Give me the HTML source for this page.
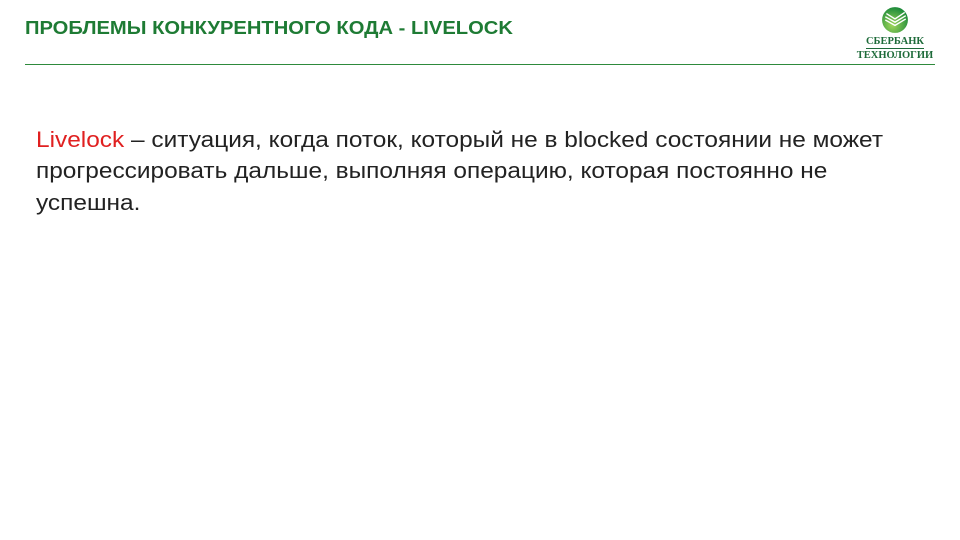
<!DOCTYPE html>
<html><head><meta charset="utf-8"><style>
body{margin:0;width:960px;height:540px;background:#fff;position:relative;overflow:hidden;font-family:"Liberation Sans",sans-serif}
.t{position:absolute;left:25px;top:18px;font-size:18px;font-weight:bold;color:#1e7b34;white-space:nowrap;transform:scaleX(1.12);transform-origin:left}
.hr{position:absolute;left:25px;top:64px;width:910px;height:1px;background:#2e8a3c}
.b{position:absolute;left:36px;font-size:22px;color:#222;white-space:nowrap;transform-origin:left;transform:scaleX(1.11)}
.r{color:#e02020}
.logo{position:absolute;left:850px;top:6px;width:90px;text-align:center;font-family:"Liberation Serif",serif;font-weight:bold;color:#1e6b3a;font-size:10.5px;line-height:13px}
</style></head><body>
<div class="t">ПРОБЛЕМЫ КОНКУРЕНТНОГО КОДА - LIVELOCK</div>
<div class="logo">
<svg width="28" height="28" viewBox="0 0 26 26" style="display:block;margin:0 auto 1px">
<defs><radialGradient id="g" cx="40%" cy="70%" r="70%"><stop offset="0" stop-color="#9fd65a"/><stop offset="1" stop-color="#1c8a3a"/></radialGradient></defs>
<circle cx="13" cy="13" r="12" fill="url(#g)"/>
<path d="M5 7l8 5 9-6M4 10l9 5 10-6M4 13l9 5 10-6" stroke="#fff" stroke-width="1.3" fill="none"/>
</svg>
<div style="border-bottom:1px solid #1e6b3a;display:inline-block">СБЕРБАНК</div><br>ТЕХНОЛОГИИ</div>
<div class="hr"></div>
<div class="b" style="top:127px">
<span class="r">Livelock</span> – ситуация, когда поток, который не в blocked состоянии не может</div>
<div class="b" style="top:158px">прогрессировать дальше, выполняя операцию, которая постоянно не</div>
<div class="b" style="top:190px">успешна.</div>
</body></html>
